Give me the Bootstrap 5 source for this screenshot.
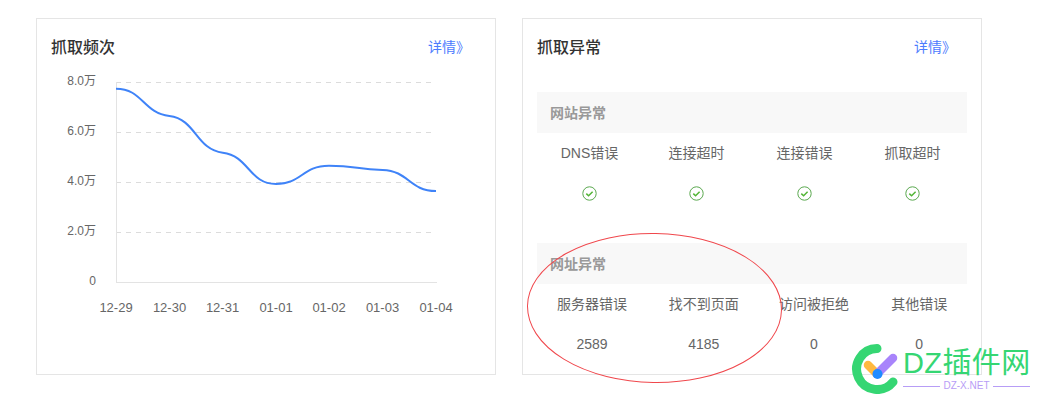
<!DOCTYPE html>
<html lang="zh-CN">
<head>
    <meta charset="UTF-8">
    <title>抓取</title>
    <link href="https://cdn.jsdelivr.net/npm/bootstrap@5.3.3/dist/css/bootstrap.min.css" rel="stylesheet">
    <style>
        html, body { height: 409px; overflow: hidden; }
        body {
            background: #fff;
            color: #666;
            font-family: "Liberation Sans", "Noto Sans CJK SC", sans-serif;
            font-size: 14px;
        }
        .stage { padding: 18px 0 0 36px; gap: 26px; height: 409px; position: relative; }
        .panel { width: 460px; height: 357px; border: 1px solid #e5e5e5; }
        .panel-head { height: 56px; padding: 0 25px 0 14px; }
        .panel-title { font-size: 16px; font-weight: 500; color: #333; margin: 0; padding-top: 2px; }
        .more { color: #4d7cfe; text-decoration: none; font-size: 14px; }
        .chart { display: block; }
        .chart text { font-size: 12px; fill: #666; }
        .chart .x-labels text { font-size: 13px; }
        .group-wrap { padding: 17px 14px 0 14px; }
        .group-head { height: 41px; background: #f8f8f8; padding: 1px 0 0 13px; font-weight: 700; font-size: 14px; color: #999; }
        .err-table { table-layout: fixed; width: 434px; margin: 0 0 30px 0; border-collapse: collapse; }
        .err-table td { height: 40px; padding: 0; text-align: center; vertical-align: middle; color: #666; }
        .err-table svg { display: block; margin: 0 auto; }
        .overlay { position: absolute; left: 0; top: 0; pointer-events: none; }
        .wm { position: absolute; left: 850px; top: 344px; width: 190px; height: 50px; }
        .wm-name { position: absolute; left: 53px; top: 2px; font-size: 29px; line-height: 34px; letter-spacing: .4px; color: #35d673; white-space: nowrap; }
        .wm-sub { position: absolute; left: 53px; top: 35px; width: 127px; font-size: 10px; line-height: 14px; color: #b79df6; gap: 3px; }
        .wm-sub i { flex: 1; height: 1px; background: #b79df6; }
    </style>
</head>
<body>
    <div class="stage d-flex align-items-start">
        <!-- 抓取频次 -->
        <div class="panel">
            <div class="panel-head d-flex justify-content-between align-items-center">
                <h2 class="panel-title">抓取频次</h2>
                <a class="more" href="#">详情》</a>
            </div>
            <svg class="chart" width="458" height="299" viewBox="37 75 458 299">
                <g stroke="#dcdcdc" stroke-dasharray="5 5">
                    <line x1="116" y1="82.5" x2="432" y2="82.5"/>
                    <line x1="116" y1="132.5" x2="432" y2="132.5"/>
                    <line x1="116" y1="182.5" x2="432" y2="182.5"/>
                    <line x1="116" y1="232.5" x2="432" y2="232.5"/>
                </g>
                <line x1="116.5" y1="82" x2="116.5" y2="282" stroke="#e3e3e3"/>
                <line x1="116" y1="282.5" x2="437" y2="282.5" stroke="#e3e3e3"/>
                <path fill="none" stroke="#3f83f8" stroke-width="2"
                      d="M116 88.7C142.7 88.7 142.7 112.8 169.4 116C196 119.2 196 149.5 222.8 152.7C249 155.9 249 184 276 184C302 184 302 165.7 329 165.7C356 165.7 356 169.2 382.6 170C409 170.8 409 191 436 191"/>
                <g text-anchor="end">
                    <text x="96" y="85">8.0万</text>
                    <text x="96" y="135">6.0万</text>
                    <text x="96" y="185">4.0万</text>
                    <text x="96" y="235">2.0万</text>
                    <text x="96" y="285">0</text>
                </g>
                <g class="x-labels" text-anchor="middle">
                    <text x="116" y="311.5">12-29</text>
                    <text x="169.5" y="311.5">12-30</text>
                    <text x="222.5" y="311.5">12-31</text>
                    <text x="276" y="311.5">01-01</text>
                    <text x="329" y="311.5">01-02</text>
                    <text x="382.5" y="311.5">01-03</text>
                    <text x="436" y="311.5">01-04</text>
                </g>
            </svg>
        </div>

        <!-- 抓取异常 -->
        <div class="panel">
            <div class="panel-head d-flex justify-content-between align-items-center">
                <h2 class="panel-title">抓取异常</h2>
                <a class="more" href="#">详情》</a>
            </div>
            <div class="group-wrap">
                <div class="group-head d-flex align-items-center">网站异常</div>
                <table class="err-table">
                    <colgroup><col style="width:105px"><col style="width:109px"><col style="width:107px"><col style="width:109px"><col style="width:4px"></colgroup>
                    <tr><td>DNS错误</td><td>连接超时</td><td>连接错误</td><td>抓取超时</td><td></td></tr>
                    <tr>
                        <td><svg width="15" height="15" viewBox="0 0 15 15"><circle cx="7.5" cy="7.5" r="6.7" fill="none" stroke="#5aa84f"/><path d="M4.3 7.6l2.3 2.2 4-4" fill="none" stroke="#52b535" stroke-width="1.5"/></svg></td>
                        <td><svg width="15" height="15" viewBox="0 0 15 15"><circle cx="7.5" cy="7.5" r="6.7" fill="none" stroke="#5aa84f"/><path d="M4.3 7.6l2.3 2.2 4-4" fill="none" stroke="#52b535" stroke-width="1.5"/></svg></td>
                        <td><svg width="15" height="15" viewBox="0 0 15 15"><circle cx="7.5" cy="7.5" r="6.7" fill="none" stroke="#5aa84f"/><path d="M4.3 7.6l2.3 2.2 4-4" fill="none" stroke="#52b535" stroke-width="1.5"/></svg></td>
                        <td><svg width="15" height="15" viewBox="0 0 15 15"><circle cx="7.5" cy="7.5" r="6.7" fill="none" stroke="#5aa84f"/><path d="M4.3 7.6l2.3 2.2 4-4" fill="none" stroke="#52b535" stroke-width="1.5"/></svg></td>
                        <td></td>
                    </tr>
                </table>
                <div class="group-head d-flex align-items-center">网址异常</div>
                <table class="err-table">
                    <colgroup><col style="width:110px"><col style="width:113.5px"><col style="width:107px"><col style="width:103.5px"></colgroup>
                    <tr><td>服务器错误</td><td>找不到页面</td><td>访问被拒绝</td><td>其他错误</td></tr>
                    <tr><td>2589</td><td>4185</td><td>0</td><td>0</td></tr>
                </table>
            </div>
        </div>

        <!-- 手绘红圈 -->
        <svg class="overlay" width="1050" height="409">
            <ellipse cx="654.5" cy="308" rx="127" ry="74.5" transform="rotate(1 654.5 308)" fill="none" stroke="#f0474c"/>
        </svg>

        <!-- 水印 -->
        <div class="wm">
            <svg class="overlay" width="50" height="50" viewBox="0 0 50 50">
                <path d="M27 4.5A20.5 20.5 0 1 0 43 38" fill="none" stroke="#35d673" stroke-width="9" stroke-linecap="round"/>
                <path d="M18 21L27 30" stroke="#ffb93f" stroke-width="8.5" stroke-linecap="round"/>
                <path d="M27 30L43 14" stroke="#a884fb" stroke-width="8.5" stroke-linecap="round"/>
                <circle cx="27.5" cy="30" r="5" fill="#1f8bff"/>
            </svg>
            <div class="wm-name">DZ插件网</div>
            <div class="wm-sub d-flex align-items-center"><i></i><span>DZ-X.NET</span><i></i></div>
        </div>
    </div>
</body>
</html>
